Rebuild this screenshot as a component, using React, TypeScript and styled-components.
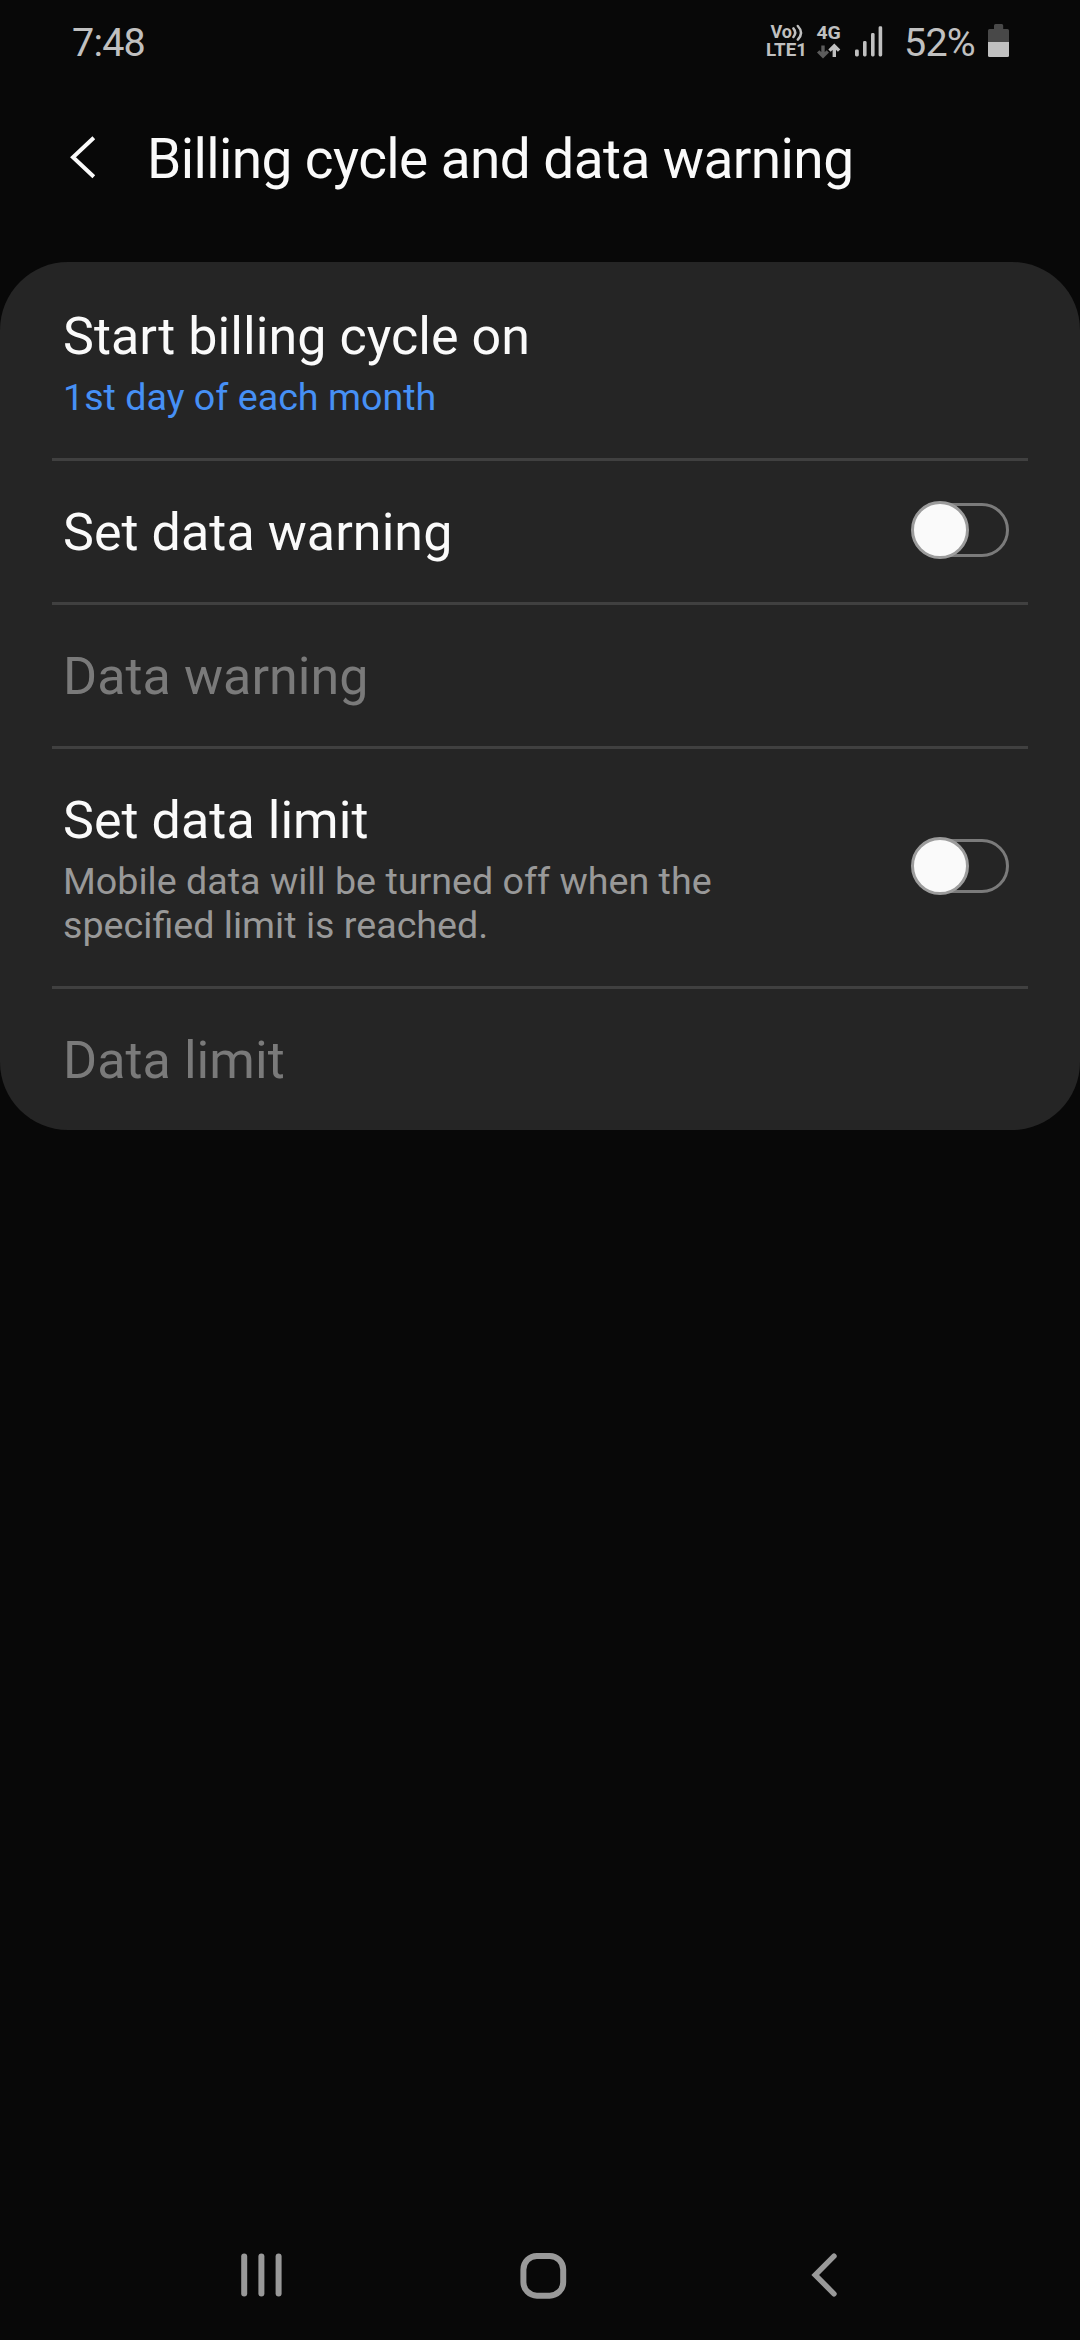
import React, { useState } from "react";
import styled, { createGlobalStyle } from "styled-components";

const GlobalStyle = createGlobalStyle`
  *, *::before, *::after { box-sizing: border-box; }
  body { margin: 0; background: #080808; }
`;

const Screen = styled.div`
  display: flex;
  flex-direction: column;
  width: 1080px;
  height: 2340px;
  background: #080808;
  color: #fafafa;
  font-family: Roboto, "Noto Sans", sans-serif;
  overflow: hidden;
`;

const StatusBar = styled.div`
  display: flex;
  justify-content: space-between;
  height: 88px;
  padding: 19px 71px 0 72px;
  color: #c0c0c0;
`;

const StatusText = styled.span`
  width: 72px;
  font-size: 39.5px;
  line-height: 47px;
  letter-spacing: -0.8px;
  white-space: nowrap;
`;

const StatusIcons = styled.div`
  display: flex;
  align-items: flex-start;
`;

const Tray = styled.svg`
  display: block;
  margin: 1px 20px 0 0;
  font-family: Roboto, sans-serif;
  font-weight: 700;
`;

const Battery = styled.svg`
  display: block;
  margin: 5px 0 0 12px;
`;

const AppBar = styled.header`
  display: flex;
  align-items: center;
  height: 174px;
  padding: 0 0 32px 70px;
`;

const BackButton = styled.button`
  display: flex;
  padding: 0;
  margin: 0 51px 4px 0;
  border: 0;
  background: none;
  color: #fafafa;
`;

const Title = styled.h1`
  margin: 0;
  font-size: 55px;
  font-weight: 400;
  line-height: 64px;
  letter-spacing: -0.6px;
  white-space: nowrap;
`;

const Card = styled.main`
  display: flex;
  flex-direction: column;
  height: 868px;
  padding: 3px 52px 0;
  border-radius: 68px;
  background: #252525;
`;

const Row = styled.section`
  display: flex;
  align-items: center;
  justify-content: space-between;
  padding: 0 19px 0 11px;
  border-bottom: 3px solid #404040;
  &:last-child { border-bottom: 0; }
`;

const RowText = styled.div`
  padding: 41px 0 39px;
`;

const Label = styled.div<{ $disabled?: boolean }>`
  font-size: 52px;
  line-height: 61px;
  letter-spacing: 0.06px;
  color: ${(p) => (p.$disabled ? "#7a7a7a" : "#fafafa")};
  white-space: nowrap;
`;

const Summary = styled.div<{ $accent?: boolean }>`
  width: 700px;
  margin: 8px 0 0;
  font-size: 37.65px;
  line-height: 44px;
  color: ${(p) => (p.$accent ? "#4690f5" : "#999999")};
`;

const Switch = styled.button`
  display: flex;
  align-items: center;
  width: 96px;
  height: 54px;
  margin: 0 0 3px;
  padding: 0;
  border: 3px solid #7b7b7b;
  border-radius: 27px;
  background: none;
`;

const Knob = styled.span<{ $on: boolean }>`
  flex: none;
  width: 58px;
  height: 58px;
  margin-left: ${(p) => (p.$on ? "37px" : "-5px")};
  border: 3px solid #9c9c9c;
  border-radius: 50%;
  background: #fafafa;
`;

const NavBar = styled.nav`
  display: flex;
  align-items: center;
  justify-content: space-between;
  height: 130px;
  margin-top: auto;
  padding: 0 241px;
  color: #999999;
`;

const NavIcon = styled.svg<{ $nudge?: number }>`
  display: block;
  margin-right: ${(p) => p.$nudge ?? 0}px;
`;

interface Setting {
  label: string;
  summary?: string;
  accent?: boolean;
  disabled?: boolean;
  toggle?: boolean;
}

const settings: Setting[] = [
  { label: "Start billing cycle on", summary: "1st day of each month", accent: true },
  { label: "Set data warning", toggle: true },
  { label: "Data warning", disabled: true },
  {
    label: "Set data limit",
    summary: "Mobile data will be turned off when the specified limit is reached.",
    toggle: true,
  },
  { label: "Data limit", disabled: true },
];

function Toggle({ label }: { label: string }) {
  const [on, setOn] = useState(false);
  return (
    <Switch role="switch" aria-checked={on} aria-label={label} onClick={() => setOn(!on)}>
      <Knob $on={on} />
    </Switch>
  );
}

function NetworkTray() {
  return (
    <Tray width="118" height="40" viewBox="766 20 118 40" fill="#c0c0c0">
      <text x="770.4" y="38" fontSize="17.6" textLength="21.6" lengthAdjust="spacingAndGlyphs">Vo</text>
      <g fill="none" stroke="#c0c0c0" strokeWidth="2.5" strokeLinecap="round">
        <path d="M793.4 28.4Q797 32.6 793.4 37" />
        <path d="M797.8 26Q804.2 32.7 797.8 39.6" />
      </g>
      <text x="766" y="56" fontSize="17.8" textLength="41" lengthAdjust="spacingAndGlyphs">LTE1</text>
      <text x="816.4" y="39.2" fontSize="18.6" textLength="24.4" lengthAdjust="spacingAndGlyphs">4G</text>
      <g fill="none" strokeWidth="3.4">
        <path stroke="#5c5c5c" d="M823 45.5V56.5M818.2 51.4L823 56.2L827.8 51.4" />
        <path stroke="#c0c0c0" d="M834.3 57V46M829.5 50.6L834.3 45.8L839.1 50.6" />
      </g>
      <rect x="855" y="49.5" width="3.8" height="7" rx="1.4" />
      <rect x="863" y="41" width="3.6" height="15.5" rx="1.4" />
      <rect x="871" y="33" width="3.6" height="23.5" rx="1.4" />
      <rect x="878.6" y="26.3" width="3.6" height="30.2" rx="1.4" />
    </Tray>
  );
}

export default function App() {
  return (
    <>
      <GlobalStyle />
      <Screen>
        <StatusBar>
          <StatusText>7:48</StatusText>
          <StatusIcons>
            <NetworkTray />
            <StatusText>52%</StatusText>
            <Battery width="21" height="33" viewBox="0 0 21 33">
              <path fill="#484848" d="M6 1.5Q6 0 7.5 0H13.7Q15.2 0 15.2 1.5V5H19.5Q21 5 21 6.5V18H0V6.5Q0 5 1.5 5H6Z" />
              <path fill="#c0c0c0" d="M0 18H21V31.5Q21 33 19.5 33H1.5Q0 33 0 31.5Z" />
            </Battery>
          </StatusIcons>
        </StatusBar>
        <AppBar>
          <BackButton aria-label="Back">
            <svg width="26" height="43" viewBox="0 0 26 43" fill="none" stroke="currentColor" strokeWidth="4">
              <path d="M23.8 1.8L3 21.3L23.8 40.8" />
            </svg>
          </BackButton>
          <Title>Billing cycle and data warning</Title>
        </AppBar>
        <Card>
          {settings.map((s) => (
            <Row key={s.label}>
              <RowText>
                <Label $disabled={s.disabled}>{s.label}</Label>
                {s.summary && <Summary $accent={s.accent}>{s.summary}</Summary>}
              </RowText>
              {s.toggle && <Toggle label={s.label} />}
            </Row>
          ))}
        </Card>
        <NavBar>
          <NavIcon width="41" height="44" viewBox="0 0 41 44" fill="currentColor">
            <rect x="0.2" y="0.5" width="6" height="43" rx="3" />
            <rect x="17.4" y="0.5" width="6" height="43" rx="3" />
            <rect x="34.6" y="0.5" width="6" height="43" rx="3" />
          </NavIcon>
          <NavIcon $nudge={7} width="47" height="47" viewBox="0 0 47 47" fill="none" stroke="currentColor" strokeWidth="6">
            <rect x="3.4" y="3.9" width="39.8" height="39.8" rx="13.5" />
          </NavIcon>
          <NavIcon width="28" height="44" viewBox="0 0 28 44" fill="none" stroke="currentColor" strokeWidth="5.4" strokeLinecap="round">
            <path d="M23 3.2L4.2 22L23 40.8" />
          </NavIcon>
        </NavBar>
      </Screen>
    </>
  );
}
